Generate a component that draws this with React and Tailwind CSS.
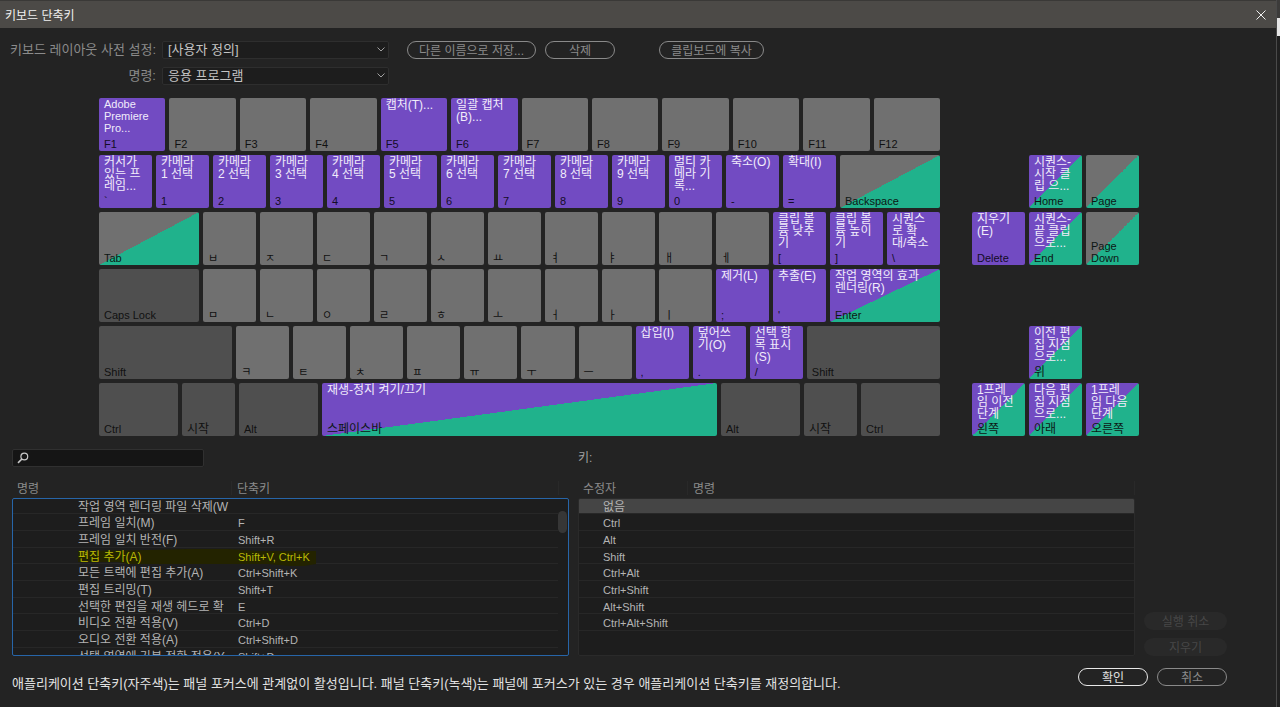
import React from "react";

const SURFACE = {
  plain: "bg-[#707070] text-[#111111]",
  dark: "bg-[#4f4f4f] text-[#111111]",
  app: "bg-[#724bc2] text-[#140c26]",
  panel: "bg-[linear-gradient(to_bottom_right,#707070_50%,#20b28c_50%)] text-[#0c1714]",
  both: "bg-[linear-gradient(to_bottom_right,#724bc2_50%,#20b28c_50%)] text-[#0c1714]",
};

const SIZE = {
  fn: "flex-[66]",
  std: "flex-[53]",
  tab: "flex-[100]",
  back: "flex-[100]",
  enter: "flex-[110]",
  shift: "flex-[133]",
  mod: "flex-[79]",
  space: "flex-[395]",
};

// Each key: label, surface, size, assigned command
const k = (label, kind = "plain", size = "std", command = "") => ({ label, kind, size, command });

const ROWS = [
  [
    k("F1", "app", "fn", "Adobe\nPremiere\nPro..."),
    k("F2", "plain", "fn"),
    k("F3", "plain", "fn"),
    k("F4", "plain", "fn"),
    k("F5", "app", "fn", "캡처(T)..."),
    k("F6", "app", "fn", "일괄 캡처\n(B)..."),
    k("F7", "plain", "fn"),
    k("F8", "plain", "fn"),
    k("F9", "plain", "fn"),
    k("F10", "plain", "fn"),
    k("F11", "plain", "fn"),
    k("F12", "plain", "fn"),
  ],
  [
    k("`", "app", "std", "커서가\n있는 프\n레임..."),
    ...[1, 2, 3, 4, 5, 6, 7, 8, 9].map((n) => k(String(n), "app", "std", `카메라\n${n} 선택`)),
    k("0", "app", "std", "멀티 카\n메라 기\n록..."),
    k("-", "app", "std", "축소(O)"),
    k("=", "app", "std", "확대(I)"),
    k("Backspace", "panel", "back"),
  ],
  [
    k("Tab", "panel", "tab"),
    ...["ㅂ", "ㅈ", "ㄷ", "ㄱ", "ㅅ", "ㅛ", "ㅕ", "ㅑ", "ㅐ", "ㅔ"].map((c) => k(c)),
    k("[", "app", "std", "클립 볼\n륨 낮추\n기"),
    k("]", "app", "std", "클립 볼\n륨 높이\n기"),
    k("\\", "app", "std", "시퀀스\n로 확\n대/축소"),
  ],
  [
    k("Caps Lock", "dark", "tab"),
    ...["ㅁ", "ㄴ", "ㅇ", "ㄹ", "ㅎ", "ㅗ", "ㅓ", "ㅏ", "ㅣ"].map((c) => k(c)),
    k(";", "app", "std", "제거(L)"),
    k("'", "app", "std", "추출(E)"),
    k("Enter", "both", "enter", "작업 영역의 효과\n렌더링(R)"),
  ],
  [
    k("Shift", "dark", "shift"),
    ...["ㅋ", "ㅌ", "ㅊ", "ㅍ", "ㅠ", "ㅜ", "ㅡ"].map((c) => k(c)),
    k(",", "app", "std", "삽입(I)"),
    k(".", "app", "std", "덮어쓰\n기(O)"),
    k("/", "app", "std", "선택 항\n목 표시\n(S)"),
    k("Shift", "dark", "shift"),
  ],
  [
    k("Ctrl", "dark", "mod"),
    k("시작", "dark", "std"),
    k("Alt", "dark", "mod"),
    k("스페이스바", "both", "space", "재생-정지 켜기/끄기"),
    k("Alt", "dark", "mod"),
    k("시작", "dark", "std"),
    k("Ctrl", "dark", "mod"),
  ],
];

const NAV = [
  null, null, null,
  null,
  k("Home", "both", "std", "시퀀스-\n시작 클\n립 으..."),
  k("Page", "panel"),
  k("Delete", "app", "std", "지우기\n(E)"),
  k("End", "both", "std", "시퀀스-\n끝 클립\n으로..."),
  k("Page\nDown", "panel"),
  null, null, null,
  null,
  k("위", "both", "std", "이전 편\n집 지점\n으로..."),
  null,
  k("왼쪽", "both", "std", "1프레\n임 이전\n단계"),
  k("아래", "both", "std", "다음 편\n집 지점\n으로..."),
  k("오른쪽", "both", "std", "1프레\n임 다음\n단계"),
];

const COMMANDS = [
  ["작업 영역 렌더링 파일 삭제(W", ""],
  ["프레임 일치(M)", "F"],
  ["프레임 일치 반전(F)", "Shift+R"],
  ["편집 추가(A)", "Shift+V, Ctrl+K"],
  ["모든 트랙에 편집 추가(A)", "Ctrl+Shift+K"],
  ["편집 트리밍(T)", "Shift+T"],
  ["선택한 편집을 재생 헤드로 확", "E"],
  ["비디오 전환 적용(V)", "Ctrl+D"],
  ["오디오 전환 적용(A)", "Ctrl+Shift+D"],
  ["선택 영역에 기본 전환 적용(Y", "Shift+D"],
];

const MODIFIERS = ["없음", "Ctrl", "Alt", "Shift", "Ctrl+Alt", "Ctrl+Shift", "Alt+Shift", "Ctrl+Alt+Shift"];

// Hangul syllables are set one size up from Latin and single jamo.
const hasHangul = (text) => /[가-힣]/.test(text);

function Key({ label, kind, size, command }) {
  return (
    <button
      type="button"
      className={`flex h-[53px] min-w-0 flex-col justify-between overflow-hidden rounded-xs pb-px text-left ${SURFACE[kind]} ${SIZE[size]}`}
    >
      <span className={`whitespace-pre pl-[5px] text-[#f1ecfb] ${hasHangul(command) ? "pt-px text-xs" : "text-[11px]"}`}>
        <span className="block leading-3">{command}</span>
      </span>
      <span className={`whitespace-pre pl-[5px] ${hasHangul(label) ? "text-xs" : "text-[11px]"}`}>
        <span className="block leading-3">{label}</span>
      </span>
    </button>
  );
}

function Pill({ children, className }) {
  return (
    <button
      type="button"
      className={`flex h-[18px] items-center justify-center whitespace-nowrap rounded-full pt-0.5 text-xs leading-none ${className}`}
    >
      {children}
    </button>
  );
}

function Preset({ id, label, value }) {
  return (
    <>
      <label htmlFor={id} className="whitespace-nowrap text-right text-[13px] leading-[18px] text-[#8b8b8b]">
        {label}
      </label>
      <div className="relative">
        <select
          id={id}
          className="block h-[18px] w-full appearance-none rounded-xs border border-[#2e2e2e] bg-[#1d1d1d] px-[5px] text-[13px] leading-4 text-[#c4c4c4]"
        >
          <option>{value}</option>
        </select>
        <svg viewBox="0 0 8 5" className="pointer-events-none absolute right-1 top-1.5 h-[5px] w-2" fill="none" stroke="#a0a0a0">
          <path d="M0.5 0.5 4 4 7.5 0.5" />
        </svg>
      </div>
    </>
  );
}

const HEAD = "h-3.5 border-r border-[#292929] pl-[5px] text-left align-middle text-xs leading-4 font-normal text-[#8b8b8b]";

export default function App() {
  return (
    <div className="flex min-h-screen bg-[#232323] font-['Liberation_Sans','Noto_Sans_CJK_KR',sans-serif] text-xs">
      <main className="flex min-w-0 flex-1 flex-col">
        <header className="flex h-7 items-center justify-between border-t border-[#3a3937] bg-[#4c4a47] pl-[5px] pr-2.5">
          <h1 className="pt-0.5 text-xs text-[#f0f0f0]">키보드 단축키</h1>
          <button type="button" aria-label="닫기">
            <svg viewBox="0 0 10 10" className="h-2.5 w-2.5" fill="none" stroke="#f0f0f0">
              <path d="M0.5 0.5 9.5 9.5M9.5 0.5 0.5 9.5" />
            </svg>
          </button>
        </header>

        <div className="flex items-start pt-[13px]">
          <div className="grid w-[389px] grid-cols-[156px_1fr] items-center gap-x-1.5 gap-y-2 text-xs">
            <Preset id="layout" label="키보드 레이아웃 사전 설정:" value="[사용자 정의]" />
            <Preset id="command" label="명령:" value="응용 프로그램" />
          </div>
          <div className="ml-[18px] flex gap-[9px]">
            <Pill className="w-[129px] border border-[#8a8a8a] text-[#8b8b8b]">다른 이름으로 저장...</Pill>
            <Pill className="w-[70px] border border-[#8a8a8a] text-[#8b8b8b]">삭제</Pill>
          </div>
          <Pill className="ml-11 w-[105px] border border-[#8a8a8a] text-[#8b8b8b]">클립보드에 복사</Pill>
        </div>

        <div className="mt-[13px] flex gap-8 pl-[99px] pr-[137px]">
          <div className="flex min-w-0 flex-[841] flex-col gap-1">
            {ROWS.map((row, r) => (
              <div key={r} className="flex gap-1">
                {row.map((key, i) => (
                  <Key key={i} {...key} />
                ))}
              </div>
            ))}
          </div>
          <div className="grid min-w-0 flex-[167] auto-rows-[53px] grid-cols-3 gap-1">
            {NAV.map((key, i) => (key ? <Key key={i} {...key} /> : <span key={i} />))}
          </div>
        </div>

        <div className="mt-[13px] flex gap-[9px] pl-3 pr-[49px]">
          <section className="min-w-0 flex-1">
            <label className="flex h-[18px] w-[192px] items-center rounded-xs border border-[#303030] bg-[#151515] pl-1">
              <svg viewBox="0 0 12 12" className="h-3 w-3 shrink-0" fill="none" stroke="#c8c8c8" strokeWidth="1.2">
                <circle cx="7.3" cy="4.5" r="3.4" />
                <path d="M4.9 7 1 10.9" strokeWidth="1.6" />
              </svg>
              <input type="text" aria-label="검색" className="min-w-0 flex-1 bg-transparent px-1 text-[11px] text-[#c4c4c4] outline-none" />
            </label>
            <table className="mt-3.5 block">
              <thead className="block">
                <tr className="grid h-[17px] grid-cols-[220px_1fr_10px]">
                  <th className={HEAD}>명령</th>
                  <th className={HEAD}>단축키</th>
                </tr>
              </thead>
              <tbody className="relative grid h-[158px] grid-rows-[15px_repeat(3,17px_17px_16px)] overflow-hidden rounded-xs border border-[#2765a8] bg-[#1d1d1d] text-[#b4b4b4] after:absolute after:right-px after:top-3 after:h-[22px] after:w-[9px] after:rounded-full after:bg-[#363636]">
                {COMMANDS.map(([name, keys], i) => (
                  <tr
                    key={name}
                    className={`relative mr-2.5 grid grid-cols-[219px_1fr] items-center border-b border-[#272727] ${
                      i === 3 ? "text-[#b9b904]" : ""
                    }`}
                  >
                    <td className="whitespace-nowrap pl-[65px] pt-px leading-[14px]">
                      {i === 3 && (
                        <svg viewBox="0 0 238 18" className="absolute left-[65px] top-px h-[18px] w-[238px]">
                          <path d="M0 2 70 1 110 0H150L180 2H238V15L226 17H212L190 15H50L40 13H0Z" fill="#232300" />
                        </svg>
                      )}
                      <span className="relative">{name}</span>
                    </td>
                    <td className="relative pl-1.5 pt-0.5 text-[11px] leading-[14px]">{keys}</td>
                  </tr>
                ))}
              </tbody>
            </table>
          </section>

          <section className="min-w-0 flex-1">
            <h2 className="flex h-[18px] items-center text-xs text-[#a0a0a0]">키:</h2>
            <table className="mt-3.5 block">
              <thead className="block">
                <tr className="grid h-[17px] grid-cols-[110px_1fr]">
                  <th className={HEAD}>수정자</th>
                  <th className={HEAD}>명령</th>
                </tr>
              </thead>
              <tbody className="grid h-[158px] grid-rows-[15px_repeat(3,17px_17px_16px)] overflow-hidden rounded-xs border border-[#2a2a2a] bg-[#1d1d1d] text-[#b4b4b4]">
                {MODIFIERS.map((name, i) => (
                  <tr
                    key={name}
                    className={`grid grid-cols-[109px_1fr] items-center border-b border-[#272727] ${
                      i === 0 ? "bg-[#454545] text-xs" : "text-[11px]"
                    }`}
                  >
                    <td className="whitespace-nowrap pl-6 pt-0.5 leading-3">{name}</td>
                    <td />
                  </tr>
                ))}
              </tbody>
            </table>
          </section>

          <div className="flex w-[83px] flex-col justify-end gap-2">
            <Pill className="bg-[#292929] text-[#474747]">실행 취소</Pill>
            <Pill className="bg-[#292929] text-[#474747]">지우기</Pill>
          </div>
        </div>

        <footer className="mt-3 flex items-start justify-between pb-5 pl-3 pr-[49px]">
          <p className="pt-2 text-[13px] leading-4 text-[#e2e2e2]">
            애플리케이션 단축키(자주색)는 패널 포커스에 관계없이 활성입니다. 패널 단축키(녹색)는 패널에 포커스가 있는 경우 애플리케이션 단축키를 재정의합니다.
          </p>
          <div className="flex gap-[9px]">
            <Pill className="w-[70px] border border-[#e8e8e8] text-[#e0e0e0]">확인</Pill>
            <Pill className="w-[70px] border border-[#8a8a8a] text-[#8b8b8b]">취소</Pill>
          </div>
        </footer>
      </main>

      <aside className="flex w-1 flex-col border-l border-[#4a4a4a] bg-[#202020]">
        <div className="h-[18px] bg-[#3c3b3a]" />
        <div className="h-[18px] bg-[#e6e6e6]" />
      </aside>
    </div>
  );
}
